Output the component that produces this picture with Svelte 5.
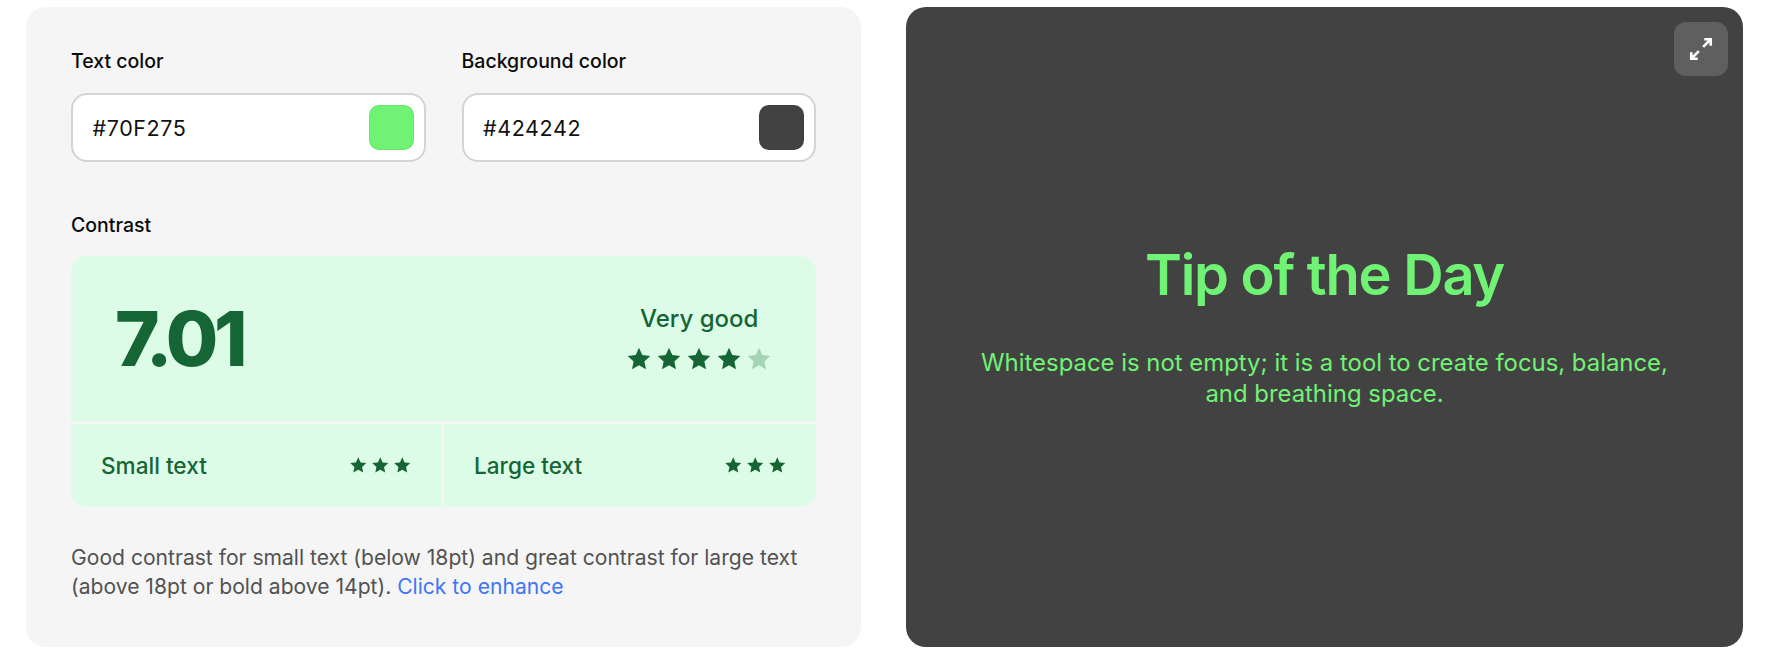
<script lang="ts">
	const star = 'M12 1.6l3.05 6.75 7.35.85-5.45 5 1.5 7.25L12 17.8l-6.45 3.65 1.5-7.25-5.45-5 7.35-.85z';
	const fields = [
		{ label: 'Text color', value: '#70F275' },
		{ label: 'Background color', value: '#424242' }
	];
	const overall = [1, 1, 1, 1, 0];
	const sizes = ['Small text', 'Large text'];
</script>

<main class="page">
	<section class="panel">
		<div class="fields">
			{#each fields as f}
				<div class="field">
					<span class="label">{f.label}</span>
					<div class="input">
						<span class="value">{f.value}</span>
						<span class="swatch" style="background: {f.value}"></span>
					</div>
				</div>
			{/each}
		</div>

		<span class="label contrast-label">Contrast</span>
		<div class="score">
			<div class="score-top">
				<span class="ratio">7.01</span>
				<div class="rating">
					<span class="rating-text">Very good</span>
					<div class="stars big">
						{#each overall as on}
							<svg viewBox="0 0 24 24" class:off={!on}><path d={star} /></svg>
						{/each}
					</div>
				</div>
			</div>
			<div class="score-bottom">
				{#each sizes as s}
					<div class="size">
						<span>{s}</span>
						<div class="stars small">
							{#each [1, 2, 3] as _}
								<svg viewBox="0 0 24 24"><path d={star} /></svg>
							{/each}
						</div>
					</div>
				{/each}
			</div>
		</div>

		<p class="note">
			Good contrast for small text (below 18pt) and great contrast for large text (above 18pt or
			bold above 14pt). <a href="#enhance">Click to enhance</a>
		</p>
	</section>

	<section class="preview">
		<button class="expand" aria-label="Expand preview">
			<svg viewBox="0 0 24 24" width="26" height="26" fill="none" stroke="#fff" stroke-width="2.4">
				<path d="M14 10l7-7M15 3h6v6M10 14l-7 7M3 15v6h6" />
			</svg>
		</button>
		<h1>Tip of the Day</h1>
		<p>Whitespace is not empty; it is a tool to create focus, balance, and breathing space.</p>
	</section>
</main>

<style>
	:global(body) {
		margin: 0;
		background: #fff;
		font-family: Inter, 'Liberation Sans', sans-serif;
	}

	.page {
		display: grid;
		grid-template-columns: 835px 837px;
		gap: 45px;
		padding: 7px 33px 21px 26px;
	}

	.panel {
		background: #f5f5f5;
		border-radius: 20px;
		height: 640px;
		box-sizing: border-box;
		padding: 42px 45px 0;
	}

	.fields {
		display: grid;
		grid-template-columns: 354.5px 354.5px;
		gap: 36px;
	}

	.label {
		display: block;
		font-size: 19.5px;
		line-height: 24px;
		font-weight: 500;
		color: #0b0b0b;
	}

	.input {
		margin-top: 20px;
		height: 69px;
		box-sizing: border-box;
		border: 2px solid #d4d4d4;
		border-radius: 16px;
		background: #fff;
		display: flex;
		align-items: center;
		justify-content: space-between;
		padding: 0 10px 0 19.5px;
	}

	.value {
		font-size: 21.5px;
		color: #111;
		letter-spacing: 0.6px;
		margin-top: 1px;
	}

	.swatch {
		width: 45px;
		height: 45px;
		border-radius: 10px;
		box-shadow: inset 0 0 0 1px rgba(0, 0, 0, 0.06);
	}

	.contrast-label {
		margin-top: 51px;
	}

	.score {
		margin-top: 19px;
		width: 745px;
		border-radius: 16px;
		overflow: hidden;
		display: flex;
		flex-direction: column;
		gap: 3px;
		color: #166534;
	}

	.score-top {
		background: #dcfce7;
		height: 165px;
		box-sizing: border-box;
		display: flex;
		align-items: center;
		justify-content: space-between;
		padding: 0 44px;
	}

	.ratio {
		font-size: 76px;
		font-weight: 800;
		letter-spacing: -4.4px;
		line-height: 1;
		margin-top: -1px;
	}

	.rating {
		display: flex;
		flex-direction: column;
		align-items: center;
		gap: 11px;
		margin-top: -2px;
	}

	.rating-text {
		font-size: 24px;
		line-height: 32px;
		font-weight: 550;
	}

	.stars {
		display: flex;
	}

	.stars svg {
		display: block;
		fill: #166534;
	}

	.stars svg.off {
		fill: #a3d5b5;
	}

	.big {
		gap: 3.9px;
	}

	.big svg {
		width: 26px;
		height: 26px;
	}

	.small {
		gap: 3.5px;
	}

	.small svg {
		width: 18.5px;
		height: 18.5px;
	}

	.score-bottom {
		display: grid;
		grid-template-columns: 370px 372px;
		gap: 3px;
	}

	.size {
		background: #dcfce7;
		height: 83px;
		box-sizing: border-box;
		display: flex;
		align-items: center;
		justify-content: space-between;
		padding: 0 30px;
		font-size: 22.6px;
		font-weight: 550;
	}

	.note {
		margin: 36px 0 0;
		width: 745px;
		font-size: 21.1px;
		line-height: 29px;
		color: #525252;
	}

	.note a {
		color: #3f76f5;
		text-decoration: none;
	}

	.preview {
		position: relative;
		height: 640px;
		box-sizing: border-box;
		background: #424242;
		border-radius: 20px;
		color: #70f275;
		display: flex;
		flex-direction: column;
		align-items: center;
		justify-content: center;
		text-align: center;
		padding: 0 60px 4px;
	}

	.preview h1 {
		margin: 0 0 38px;
		font-size: 56px;
		line-height: 68px;
		font-weight: 600;
		letter-spacing: -1.25px;
	}

	.preview p {
		margin: 0;
		max-width: 700px;
		font-size: 23.9px;
		line-height: 31px;
	}

	.expand {
		position: absolute;
		top: 15px;
		right: 15px;
		width: 54px;
		height: 54px;
		border: none;
		border-radius: 12px;
		background: #5f5f5f;
		display: flex;
		align-items: center;
		justify-content: center;
		padding: 0;
	}
</style>
